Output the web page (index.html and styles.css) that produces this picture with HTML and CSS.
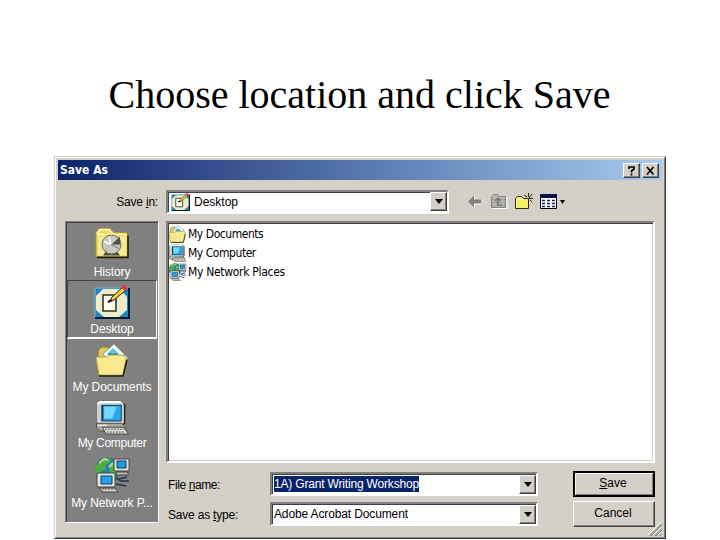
FILE: index.html
```html
<!DOCTYPE html>
<html lang="en">
<head>
  <meta charset="UTF-8">
  <title>Choose location and click Save</title>
  <link rel="stylesheet" href="styles.css">
</head>
<body>
  <!-- shared icons -->
  <svg class="sprite" width="0" height="0">
    <symbol id="icon-history" viewBox="0 0 34 32">
      <path d="M1 29V5l3-4h11l4 4h12l2 3v21z" fill="#f0dd66" stroke="#a89437"/>
      <path d="M3 9h28v19H3z" fill="#f7e98f"/>
      <path d="M2 7h30M2 6l3-4h9l3 4" fill="none" stroke="#fff8ae" stroke-width="1.5"/>
      <path d="M2 30h31V8" fill="none" stroke="#17160c" stroke-width="1.500"/>
      <path d="M11 24h11l3 4H8z" fill="#49483c"/>
      <circle cx="16.5" cy="17" r="9.5" fill="#c9c9c2" stroke="#746e54"/>
      <path d="M16.5 17L25 9v8z" fill="#505050"/>
      <path d="M9 14l7 3-5 5M14 10l2 7" stroke="#fff" fill="none" stroke-width="1.5"/>
      <path d="M16 17l8 4M16 17l-6 6" stroke="#777"/>
    </symbol>
    <symbol id="icon-desktop" viewBox="0 0 36 34">
      <path d="M1 3h33v30H1z" fill="#2183be"/>
      <path d="M1 33V3h33" fill="none" stroke="#70bddb"/>
      <path d="M1 33h34V3" fill="none" stroke="#061c33" stroke-width="2"/>
      <path d="M9 4h17l7 8v13l-8 7H10l-8-7V11z" fill="#efecc8"/>
      <path d="M9 10h13v16H9z" fill="#fffff0" stroke="#292d2a" stroke-width="1.5"/>
      <path d="M15 17l3-5L29 2l3 3-12 10z" fill="#f3ce44" stroke="#2a2613"/>
      <path d="M27 2l3-2 4 3-3 3z" fill="#dd3544"/>
      <path d="M14 17l4-2" stroke="#111" stroke-width="2"/>
    </symbol>
    <symbol id="icon-documents" viewBox="0 0 34 34">
      <path d="M3 31V8l3-4h7l4 5h12v20l-4 4z" fill="#ddc959" stroke="#8c7930"/>
      <path d="M8 11L19 1l14 14-12 10z" fill="#f7ffff" stroke="#809ba1"/>
      <path d="M12 11l6-6 8 8-8 6z" fill="#60bed9"/>
      <path d="M14 11l4 1 4-1" stroke="#25709b" fill="none" stroke-width="2"/>
      <path d="M1 14h11l3-2h14l2 4-3 16H4z" fill="#f8e98e" stroke="#b7a34a"/>
      <path d="M4 33h24l4-16" fill="none" stroke="#27220c" stroke-width="1.5"/>
    </symbol>
    <symbol id="icon-computer" viewBox="0 0 36 36">
      <path d="M2 4l4-3h21l4 3v20l-4 2H6l-4-3z" fill="#d3d1c6" stroke="#73736d"/>
      <path d="M3 4l3-2h21" fill="none" stroke="#fff" stroke-width="2"/>
      <path d="M7 5h21v17H7z" fill="#073f69"/>
      <path d="M9 6h18v15H9z" fill="#29a9ec"/>
      <path d="M10 7h13l-5 12h-8z" fill="#78d9fa"/>
      <path d="M30 4l1 1v19l-3 2" fill="none" stroke="#21242a" stroke-width="1.5"/>
      <path d="M2 24h26l4 4v4H6l-4-3z" fill="#a9a9a1" stroke="#50514d"/>
      <path d="M3 26h10" stroke="#fff"/>
      <path d="M8 28h22l5 7H12z" fill="#dddcd2" stroke="#47463f"/>
      <path d="M11 30h19M13 33h18" stroke="#555" stroke-dasharray="2 1"/>
    </symbol>
    <symbol id="icon-network" viewBox="0 0 36 36">
      <circle cx="13" cy="13" r="12" fill="#2381b4" stroke="#1a5b62"/>
      <path d="M3 7l8-6 7 1-4 5-3 1 1 5-5 1-2 5-4-2V9zM15 10l8-6 2 9-4 9-5-4z" fill="#50ac49"/>
      <path d="M5 6l5-4 4 1M15 10l4-4" stroke="#b4e29a" stroke-width="2" fill="none"/>
      <path d="M20 2h15v12H20z" fill="#e4e2d7" stroke="#444"/>
      <path d="M23 4h9v7h-9z" fill="#239ae1" stroke="#0b416b"/>
      <path d="M22 15h12v3H22z" fill="#bbb" stroke="#444"/>
      <path d="M22 21l5 3h8M22 27l10 2M25 22l8-2" stroke="#203648" stroke-width="1.5" fill="none"/>
      <path d="M3 16h18v14H3z" fill="#e4e2d7" stroke="#444"/>
      <path d="M7 19h11v8H7z" fill="#28a2e9" stroke="#0b416b"/>
      <path d="M5 31h16l3 4H9z" fill="#d7d4c7" stroke="#444"/>
      <path d="M8 32h13" stroke="#555" stroke-dasharray="2 1"/>
    </symbol>
  </svg>

  <h1 class="heading">Choose location and click Save</h1>

  <div class="dialog">
    <div class="dialog__inner">
      <div class="titlebar">
        <span class="titlebar__text">Save As</span>
        <span class="titlebar__btn">
          <svg width="11" height="11" viewBox="0 0 11 11"><path d="M3 4V2h5v2L5.500 6v1.500M5.500 8.500v2" fill="none" stroke="#000" stroke-width="1.700"/></svg>
        </span>
        <span class="titlebar__btn">
          <svg width="11" height="11" viewBox="0 0 11 11"><path d="M2 2l6.500 7.500M8.500 2L2 9.500" stroke="#000" stroke-width="1.700"/></svg>
        </span>
      </div>

      <div class="toolbar">
        <label class="toolbar__label">Save <u>i</u>n:</label>
        <div class="combo combo--location">
          <svg class="combo__icon" width="19" height="18"><use href="#icon-desktop"/></svg>
          <span class="combo__text">Desktop</span>
          <span class="combo__arrow"></span>
        </div>
        <div class="toolbar__icons">
          <svg width="16" height="18" viewBox="0 0 16 18"><path d="M2 9.500l6-6v4h6v4H8v4z" fill="#fff"/><path d="M1 8.500l6-6v4h7v4H7v4z" fill="#808080"/></svg>
          <svg width="18" height="18" viewBox="0 0 18 18">
            <path d="M2 15.500h15V4" stroke="#fff" fill="none"/>
            <path d="M1.500 14.500v-11l2-2h4l2 2h6v11z" fill="#b9b7b2" stroke="#858585"/>
            <path d="M2 6.500h13M2 9.500h13M2 12.500h13" stroke="#858585" stroke-dasharray="1 1"/>
            <path d="M5 8l3-3 3 3M8 6v6h4" stroke="#777" stroke-width="1.500" fill="none"/>
          </svg>
          <svg width="18" height="18" viewBox="0 0 18 18">
            <path d="M.500 15.500v-10l2-2h4l2 2h5v10z" fill="#f3f06a" stroke="#302e08"/>
            <path d="M1.500 14V6.500H10" stroke="#fffcb4" fill="none"/>
            <path d="M13.500 0v4M13.500 7v3M9 2l3 2M17 1l-3 4M14 5.500h4M15 7l2 2" stroke="#222"/>
          </svg>
          <svg width="27" height="18" viewBox="0 0 27 18">
            <path d="M.500 1.500h16v14H.500z" fill="#fff" stroke="#000"/>
            <path d="M0 3h17" stroke="#071449" stroke-width="4"/>
            <path d="M2 7.500h3m2 0h3m2 0h3M2 10.500h3m2 0h3m2 0h3M2 13.500h3m2 0h3m2 0h3" stroke="#17215a" stroke-width="1.500"/>
            <path d="M20 7h5l-2.500 4z" fill="#000"/>
          </svg>
        </div>
      </div>

      <div class="content">
        <div class="places">
          <div class="place">
            <svg width="34" height="33"><use href="#icon-history"/></svg>
            <span class="place__name place__name--history">History</span>
          </div>
          <div class="place place--active">
            <svg width="36" height="34"><use href="#icon-desktop"/></svg>
            <span class="place__name">Desktop</span>
          </div>
          <div class="place">
            <svg width="34" height="34"><use href="#icon-documents"/></svg>
            <span class="place__name">My Documents</span>
          </div>
          <div class="place">
            <svg width="36" height="35"><use href="#icon-computer"/></svg>
            <span class="place__name place__name--computer">My Computer</span>
          </div>
          <div class="place">
            <svg width="36" height="36"><use href="#icon-network"/></svg>
            <span class="place__name">My Network P...</span>
          </div>
        </div>

        <div class="main">
          <div class="files">
            <div class="file"><svg width="19" height="18"><use href="#icon-documents"/></svg><span class="file__name">My Documents</span></div>
            <div class="file"><svg width="19" height="18"><use href="#icon-computer"/></svg><span class="file__name">My Computer</span></div>
            <div class="file"><svg width="19" height="18"><use href="#icon-network"/></svg><span class="file__name file__name--network">My Network Places</span></div>
          </div>

          <div class="fields">
            <label class="fields__label">File <u>n</u>ame:</label>
            <div class="combo">
              <span class="combo__text combo__text--selected">1A) Grant Writing Workshop</span>
              <span class="combo__arrow"></span>
            </div>
            <button class="btn btn--default"><u>S</u>ave</button>

            <label class="fields__label fields__label--type">Save as <u>t</u>ype:</label>
            <div class="combo">
              <span class="combo__text combo__text--type">Adobe Acrobat Document</span>
              <span class="combo__arrow"></span>
            </div>
            <button class="btn">Cancel</button>
          </div>
        </div>
      </div>

      <svg class="grip" width="14" height="14" viewBox="0 0 14 14">
        <path d="M0 13L13 0M5 13l8-8M10 13l3-3" stroke="#fff"/>
        <path d="M1.500 14L14 1.500M3 14L14 3M6.500 14L14 6.500M8 14l6-6M11.500 14l2.500-2.500" stroke="#808080"/>
      </svg>
    </div>
  </div>
</body>
</html>
```
FILE: styles.css
```css
* {
  box-sizing: border-box;
}

body {
  margin: 0;
  height: 540px;
  overflow: hidden;
  background: #fff;
  color: #000;
  font-family: "Liberation Sans", Arial, sans-serif;
  font-size: 12px;
}

svg {
  display: block;
  flex-shrink: 0;
}

.sprite {
  display: none;
}

.heading {
  margin: 0;
  height: 156px;
  padding: 72px 1px 0 0;
  font-family: "Liberation Serif", "Times New Roman", serif;
  font-size: 40px;
  font-weight: normal;
  line-height: 46px;
  text-align: center;
  white-space: nowrap;
}

/* window */
.dialog {
  width: 612px;
  height: 383px;
  margin-left: 54px;
  border: 1px solid;
  border-color: #d4d0c8 #404040 #404040 #d4d0c8;
  background: #d4d0c8;
}

.dialog__inner {
  position: relative;
  height: 381px;
  padding: 2px;
  border: 1px solid;
  border-color: #fff #808080 #808080 #fff;
}

.titlebar {
  display: flex;
  align-items: center;
  height: 20px;
  padding: 0 3px 0 2px;
  background: linear-gradient(to right, #0a246a, #a6caf0);
}

.titlebar__text {
  flex: 1;
  color: #fff;
  font-family: "DejaVu Sans Condensed", "DejaVu Sans", sans-serif;
  font-weight: bold;
}

.titlebar__btn {
  display: flex;
  align-items: center;
  justify-content: center;
  width: 17px;
  height: 15px;
  margin-left: 2px;
  border: 1px solid;
  border-color: #fff #404040 #404040 #fff;
  box-shadow: inset -1px -1px #808080;
  background: #d4d0c8;
}

.toolbar {
  display: flex;
  align-items: center;
  height: 41px;
  padding: 2px 0 0 8px;
}

.toolbar__label {
  width: 100px;
  padding-right: 8px;
  letter-spacing: -0.2px;
  text-align: right;
}

.toolbar__icons {
  display: flex;
  gap: 7px;
  margin-left: 18px;
}

.combo {
  display: flex;
  align-items: center;
  height: 24px;
  padding-left: 2px;
  border: 2px solid;
  border-color: #808080 #fff #fff #808080;
  box-shadow: inset 1px 1px #404040;
  background: #fff;
}

.combo--location {
  width: 283px;
}

.combo__icon {
  margin: 0 4px 0 1px;
}

.combo__text {
  line-height: 16px;
  white-space: nowrap;
}

.combo__text--selected {
  background: #0a246a;
  color: #fff;
  letter-spacing: -0.18px;
}

.combo__text--type {
  letter-spacing: -0.13px;
}

.combo__arrow {
  display: flex;
  align-items: center;
  justify-content: center;
  width: 17px;
  height: 19px;
  margin-left: auto;
  border: 1px solid;
  border-color: #fff #404040 #404040 #fff;
  box-shadow: inset -1px -1px #808080;
  background: #d4d0c8;
}

.combo__arrow::before {
  content: "";
  border: 4px solid transparent;
  border-top: 5px solid #000;
  border-bottom: 0;
}

.content {
  display: flex;
  gap: 7px;
  padding-left: 7px;
}

/* places bar */
.places {
  width: 94px;
  height: 302px;
  padding: 1px;
  border: 1px solid;
  border-color: #808080 #fff #fff #808080;
  box-shadow: inset 1px 1px #404040;
  background: #808080;
  color: #fff;
}

.place {
  display: flex;
  flex-direction: column;
  align-items: center;
  height: 57px;
  padding-top: 4px;
}

.place--active {
  height: 59px;
  border: 1px solid;
  border-color: #404040 #fff #fff #404040;
  border-bottom-width: 2px;
}

.place__name {
  margin-top: 2px;
  letter-spacing: -0.1px;
  line-height: 16px;
  white-space: nowrap;
}

.place__name--history {
  margin-top: 4px;
}

.place__name--computer {
  margin-top: 0;
  letter-spacing: -0.3px;
}

.main {
  width: 489px;
}

.files {
  height: 242px;
  padding: 1px 0 0;
  border: 2px solid;
  border-color: #808080 #fff #fff #808080;
  box-shadow: inset 1px 1px #404040, inset -1px -1px #d4d0c8;
  background: #fff;
}

.file {
  display: flex;
  align-items: center;
  height: 19px;
  font-family: "DejaVu Sans Condensed", "DejaVu Sans", sans-serif;
}

.file__name {
  margin-left: 1px;
  letter-spacing: -0.45px;
}

.file__name--network {
  letter-spacing: -0.3px;
}

/* bottom rows */
.fields {
  display: grid;
  grid-template-columns: 104px 303px 82px;
  grid-template-rows: 26px 26px;
  row-gap: 4px;
  align-items: center;
  margin-top: 8px;
}

.fields .combo {
  width: 268px;
}

.fields__label {
  padding: 2px 0 0 2px;
  letter-spacing: -0.4px;
}

.fields__label--type {
  letter-spacing: -0.2px;
}

.btn {
  width: 82px;
  height: 26px;
  padding: 0 2px 2px 0;
  border: 1px solid;
  border-color: #fff #404040 #404040 #fff;
  box-shadow: inset -1px -1px #808080;
  background: #d4d0c8;
  color: #000;
  font: inherit;
}

.btn--default {
  border: 2px solid #000;
  box-shadow: inset 1px 1px #fff, inset -1px -1px #808080;
}

.grip {
  position: absolute;
  right: 2px;
  bottom: 1px;
}
```
